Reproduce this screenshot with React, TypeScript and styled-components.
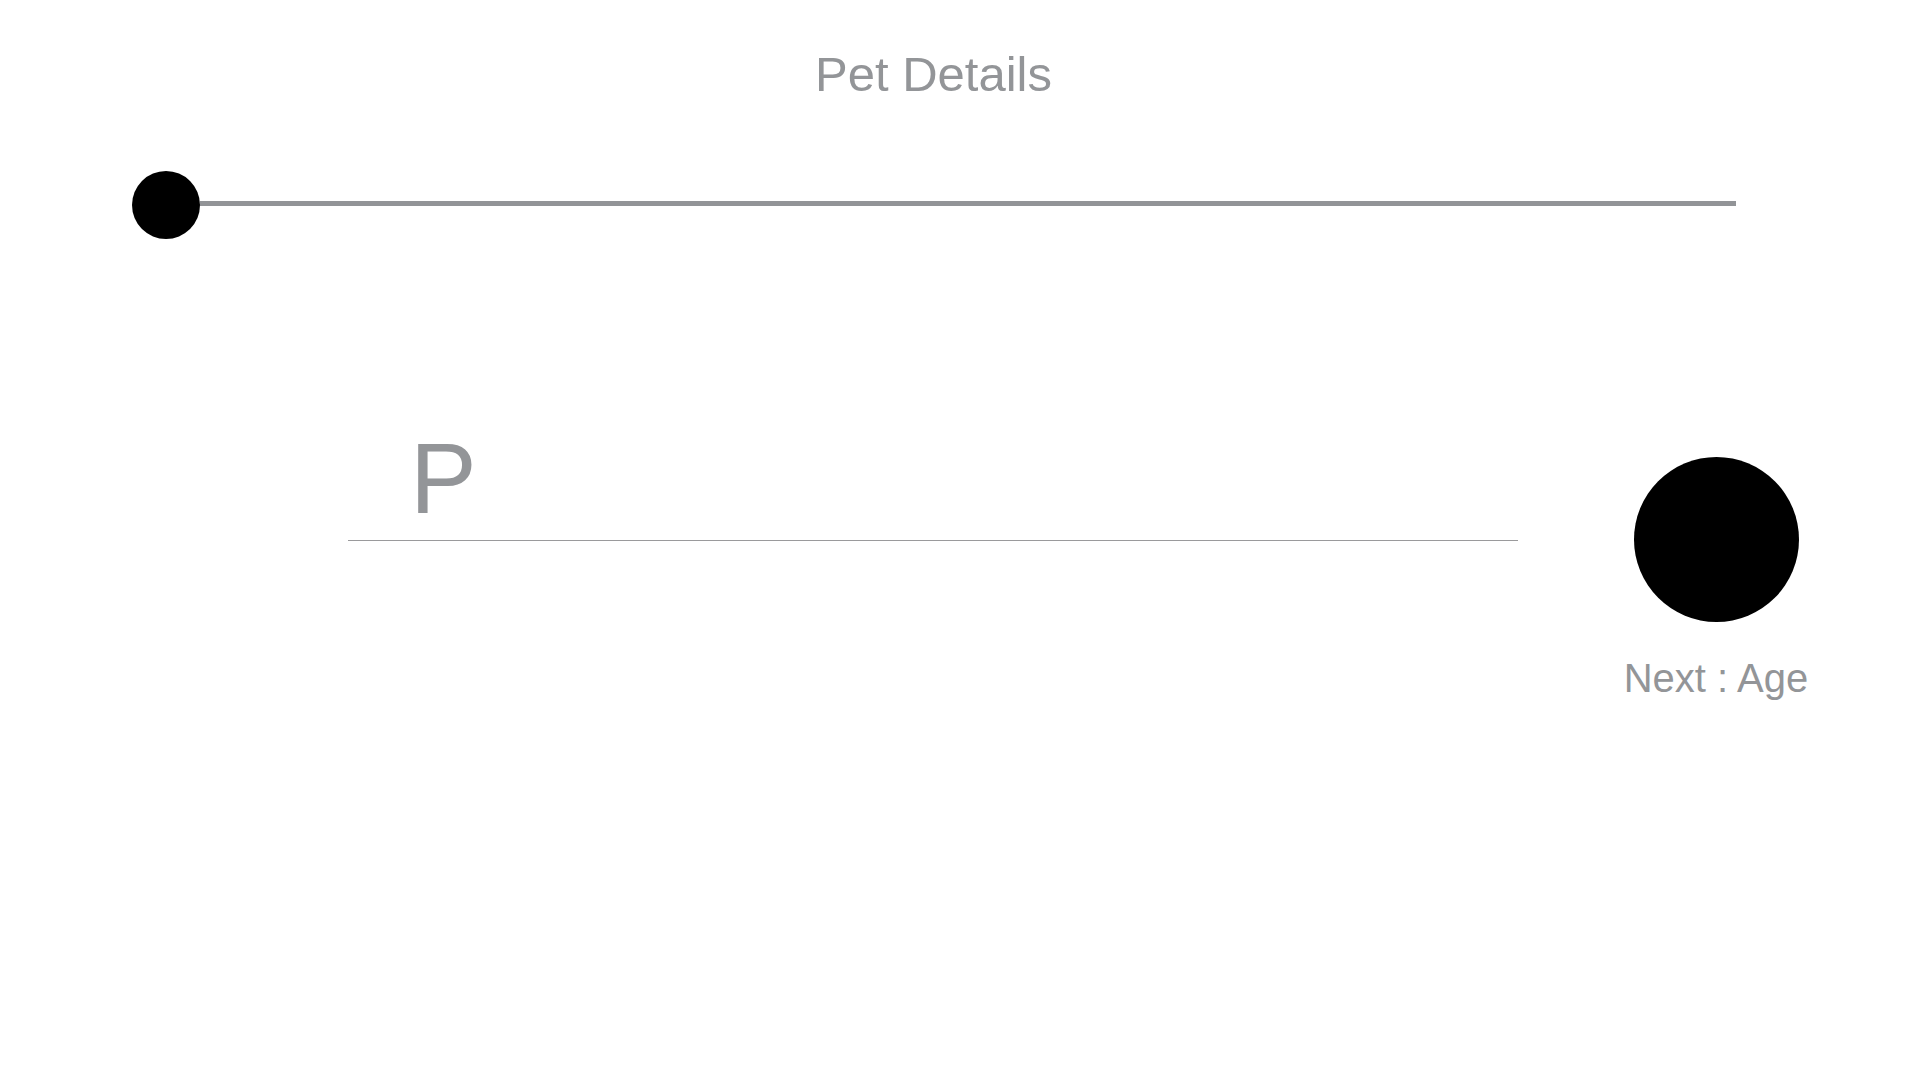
import React from "react";
import styled, { createGlobalStyle } from "styled-components";

const GlobalStyle = createGlobalStyle`
  html, body { margin: 0; padding: 0; background: #ffffff; }
  body { font-family: "Liberation Sans", Arial, Helvetica, sans-serif; }
`;

const Page = styled.div`
  width: 1920px;
  min-height: 1080px;
  display: flex;
  flex-direction: column;
  background: #ffffff;
`;

const Title = styled.h1`
  margin: 0;
  padding: 44px 53px 0 0;
  font-size: 49px;
  line-height: 60px;
  font-weight: 400;
  color: #939598;
  text-align: center;
`;

const Progress = styled.div`
  margin-top: 67px;
  padding: 0 184px 0 132px;
  display: flex;
  align-items: center;
`;

const Dot = styled.div<{ $size: number }>`
  width: ${(p) => p.$size}px;
  height: ${(p) => p.$size}px;
  border-radius: 50%;
  background: #000000;
  flex-shrink: 0;
`;

const Track = styled.div`
  flex: 1;
  height: 5px;
  margin-bottom: 3px;
  background: #929497;
`;

const FormRow = styled.div`
  margin-top: 178px;
  padding-left: 348px;
  display: flex;
  align-items: flex-start;
  gap: 105px;
`;

const Field = styled.input`
  width: 1170px;
  height: 123px;
  margin: 0;
  padding: 0 0 0 62px;
  box-sizing: content-box;
  border: none;
  border-bottom: 1px solid #9a9a9c;
  outline: none;
  background: transparent;
  font-family: "Liberation Sans", Arial, Helvetica, sans-serif;
  font-size: 100px;
  color: #939598;
  width: 1108px;
`;

const NextGroup = styled.div`
  margin-top: 40px;
  width: 186px;
  display: flex;
  flex-direction: column;
  align-items: center;
  gap: 32px;
`;

const NextLabel = styled.span`
  font-size: 40px;
  line-height: 48px;
  color: #939598;
  white-space: nowrap;
`;

export default function App() {
  return (
    <>
      <GlobalStyle />
      <Page>
        <Title>Pet Details</Title>
        <Progress>
          <Dot $size={68} />
          <Track />
        </Progress>
        <FormRow>
          <Field defaultValue="P" aria-label="Pet name" />
          <NextGroup>
            <Dot $size={165} />
            <NextLabel>Next : Age</NextLabel>
          </NextGroup>
        </FormRow>
      </Page>
    </>
  );
}
